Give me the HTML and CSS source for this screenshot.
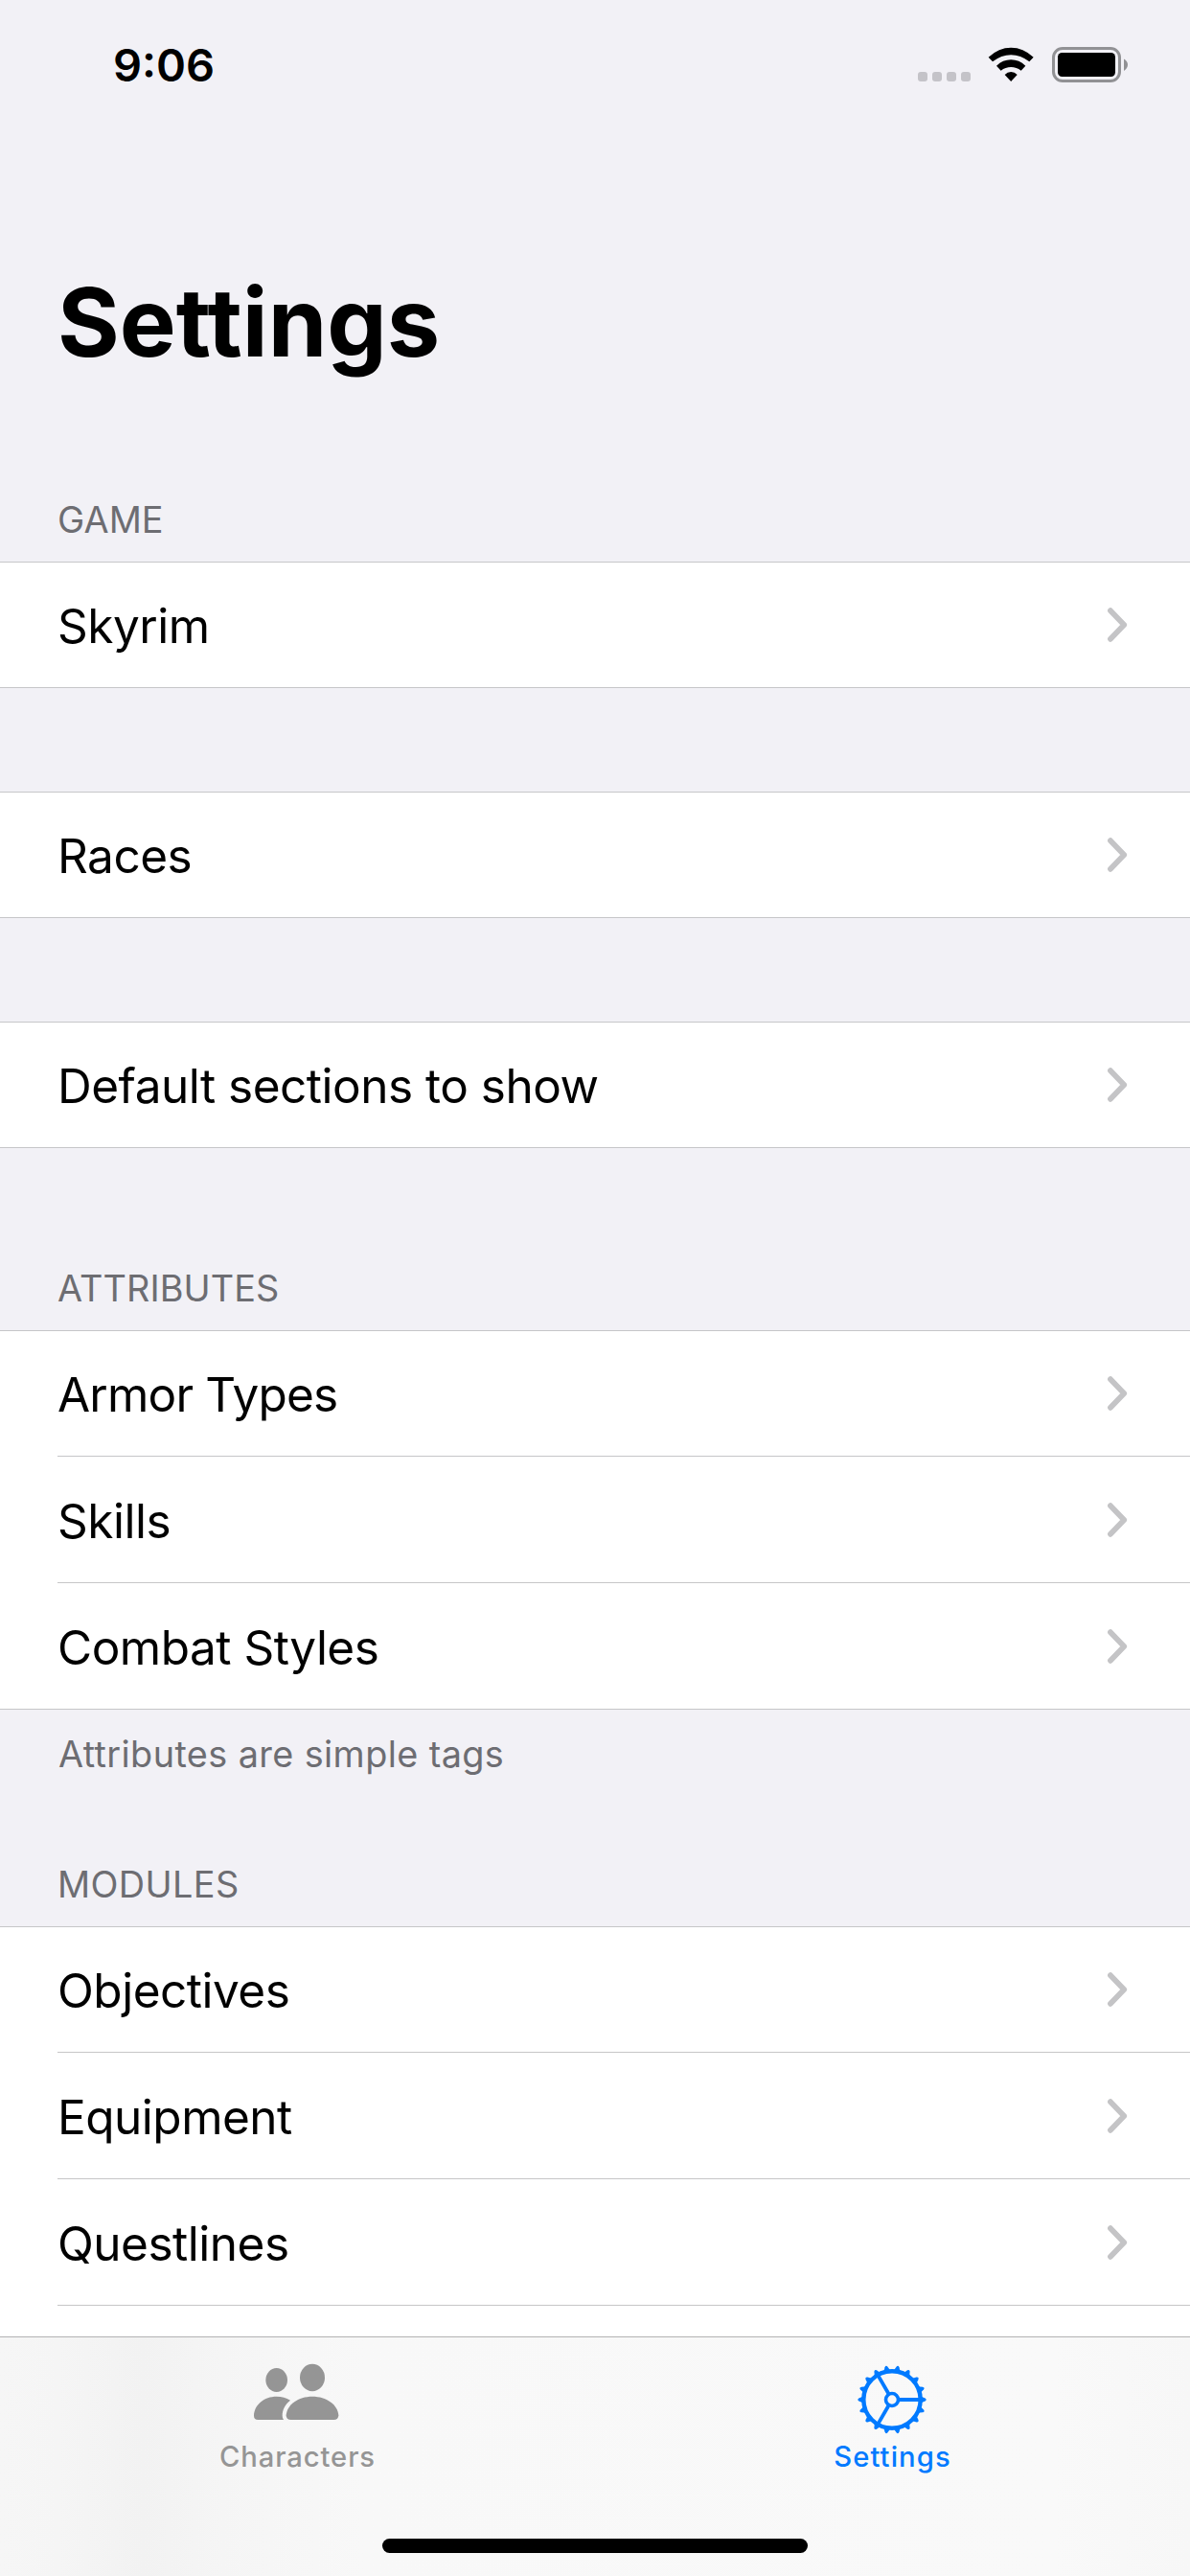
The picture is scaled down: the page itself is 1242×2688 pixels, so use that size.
FILE: index.html
```html
<!DOCTYPE html>
<html lang="en">
<head>
<meta charset="utf-8">
<title>Settings</title>
<link rel="stylesheet" href="styles.css">
</head>
<body>
<svg class="defs" width="0" height="0" aria-hidden="true">
  <symbol id="chevron" viewBox="0 0 22 38"><path d="M4 4.2 18.2 19 4 33.8" fill="none" stroke="#c4c4c6" stroke-width="5.8" stroke-linecap="round" stroke-linejoin="round"/></symbol>
</svg>
<div class="screen">
  <header class="status">
    <div class="time">9:06</div>
    <div class="indicators">
      <div class="signal"><i></i><i></i><i></i><i></i></div>
      <svg class="wifi" viewBox="394 86 145 110">
        <path d="M396 118Q428 88 466.500 88T537 118L524 132Q497 110.500 466.500 110.500T409 132Z"/>
        <path d="M421 145Q441 126 466.500 126T512 145L498 160Q484 149 466.500 149T435 160Z"/>
        <path d="M447 173Q455 164 466.500 164T486 173L466.500 194Z"/>
      </svg>
      <svg class="battery" viewBox="0 0 80 38">
        <rect x="1.500" y="1.500" width="69" height="34" rx="9.500" fill="none" stroke="#919194" stroke-width="3"/>
        <rect x="6" y="6" width="60" height="25" rx="4.500" fill="#000"/>
        <path d="M75 12.500Q79 15 79 18.500T75 25Z" fill="#919194"/>
      </svg>
    </div>
  </header>

  <h1 class="title">Settings</h1>

  <main class="list">
    <h2 class="heading">GAME</h2>
    <ul class="group">
      <li class="row"><span>Skyrim</span><svg class="chev"><use href="#chevron"/></svg></li>
    </ul>
    <ul class="group spaced">
      <li class="row"><span>Races</span><svg class="chev"><use href="#chevron"/></svg></li>
    </ul>
    <ul class="group spaced">
      <li class="row"><span>Default sections to show</span><svg class="chev"><use href="#chevron"/></svg></li>
    </ul>
    <h2 class="heading">ATTRIBUTES</h2>
    <ul class="group">
      <li class="row"><span class="tight">Armor Types</span><svg class="chev"><use href="#chevron"/></svg></li>
      <li class="row"><span>Skills</span><svg class="chev"><use href="#chevron"/></svg></li>
      <li class="row"><span>Combat Styles</span><svg class="chev"><use href="#chevron"/></svg></li>
    </ul>
    <p class="footnote">Attributes are simple tags</p>
    <h2 class="heading after-note">MODULES</h2>
    <ul class="group">
      <li class="row"><span>Objectives</span><svg class="chev"><use href="#chevron"/></svg></li>
      <li class="row"><span>Equipment</span><svg class="chev"><use href="#chevron"/></svg></li>
      <li class="row"><span>Questlines</span><svg class="chev"><use href="#chevron"/></svg></li>
      <li class="row"></li>
    </ul>
  </main>

  <nav class="tabbar">
    <div class="tabs">
      <div class="tab">
        <svg class="people" viewBox="189 135 276 186">
          <ellipse cx="266" cy="190.500" rx="34" ry="37.500"/>
          <ellipse cx="378" cy="183" rx="39" ry="42.500"/>
          <path d="M208 315Q195 315 195 302C196 268 227 242 266 242Q290 242 309 254C292 267 284 285 284 302Q284 310 288 315Z"/>
          <path d="M311 315Q296 315 296 301C298 268 334 242 378 242S458 268 460 301Q460 315 445 315Z"/>
        </svg>
        <span>Characters</span>
      </div>
      <div class="tab active">
        <svg class="gear" viewBox="-37 -37 74 74">
          <defs><path id="tooth" d="M30-3.600L34.600-1.500Q36.800 0 34.600 1.500L30 3.600Z"/></defs>
          <circle r="29.700" class="line ring"/>
          <circle r="6.500" class="line hub"/>
          <path class="line spoke" d="M7.500 0H29M-3.750 6.500-14.500 25.110M-3.750-6.500-14.500-25.110"/>
          <use href="#tooth"/><use href="#tooth" transform="rotate(20)"/><use href="#tooth" transform="rotate(40)"/>
          <use href="#tooth" transform="rotate(60)"/><use href="#tooth" transform="rotate(80)"/><use href="#tooth" transform="rotate(100)"/>
          <use href="#tooth" transform="rotate(120)"/><use href="#tooth" transform="rotate(140)"/><use href="#tooth" transform="rotate(160)"/>
          <use href="#tooth" transform="rotate(180)"/><use href="#tooth" transform="rotate(200)"/><use href="#tooth" transform="rotate(220)"/>
          <use href="#tooth" transform="rotate(240)"/><use href="#tooth" transform="rotate(260)"/><use href="#tooth" transform="rotate(280)"/>
          <use href="#tooth" transform="rotate(300)"/><use href="#tooth" transform="rotate(320)"/><use href="#tooth" transform="rotate(340)"/>
        </svg>
        <span>Settings</span>
      </div>
    </div>
    <div class="home"></div>
  </nav>
</div>
</body>
</html>
```
FILE: styles.css
```css
* { box-sizing: border-box; margin: 0; padding: 0; }

body {
  background: #f2f1f6;
  color: #000;
  font-family: Inter, "Liberation Sans", sans-serif;
}

.defs { display: block; }

.screen {
  display: flex;
  flex-direction: column;
  width: 1242px;
  height: 2688px;
  overflow: hidden;
}

/* Status bar */
.status {
  display: flex;
  justify-content: space-between;
  flex: none;
  height: 132px;
  padding: 38px 62px 0 118px;
}
.time { font-size: 47px; font-weight: 600; line-height: 60px; }
.indicators { display: flex; align-items: flex-start; padding-top: 10px; }
.signal { display: flex; gap: 5px; margin: 27px 18px 0 0; }
.signal i { width: 10px; height: 10px; border-radius: 3px; background: #c4c3c8; }
.wifi { width: 48.330px; height: 36.670px; margin: .67px 18.670px 0 0; }
.battery { width: 80px; height: 38px; margin-top: 1px; margin-right: 2px; }

.title {
  flex: none;
  padding: 144px 60px 0;
  font-size: 99px;
  font-weight: 700;
  line-height: 120px;
}

/* Grouped list */
.list { flex: 1; min-height: 0; overflow: hidden; }
.heading, .footnote {
  padding-left: 60px;
  color: #6d6d72;
  font-size: 37.800px;
  font-weight: 400;
  line-height: 48px;
}
.heading { padding-top: 122px; padding-bottom: 20px; letter-spacing: .1px; }
.heading.after-note { padding-top: 88px; letter-spacing: .4px; }
.footnote { padding-top: 22px; padding-left: 61px; letter-spacing: .4px; }

.group { list-style: none; background: #fff; border-top: 1px solid #c6c6c8; border-bottom: 1px solid #c6c6c8; }
.group.spaced { margin-top: 108px; }
.row {
  display: flex;
  align-items: center;
  justify-content: space-between;
  height: 131px;
  margin-left: 60px;
  padding-right: 65px;
  border-bottom: 1px solid #c6c6c8;
  font-size: 49.500px;
  line-height: 60px;
  letter-spacing: -.5px;
}
.row + .row { height: 132px; padding-top: 1px; }
.row:last-child { border-bottom: 0; height: 131px; }
.row:only-child { height: 130px; }
.row span { padding-top: 2px; }
.row .tight { letter-spacing: -.8px; }
.chev { flex: none; width: 22px; height: 38px; }

/* Tab bar */
.tabbar {
  display: flex;
  flex-direction: column;
  align-items: center;
  flex: none;
  height: 250px;
  border-top: 1px solid #b2b2b3;
  background: linear-gradient(90deg, #f6f6f6 0, #f5f5f5 60px, #f2f2f2 150px, #f5f5f5 230px, #f8f8f8 380px, #f9f9f9 1100px, #f7f7f7 1242px);
}
.tabs { display: flex; width: 100%; height: 210px; }
.tab {
  flex: 1;
  display: flex;
  flex-direction: column;
  align-items: center;
  color: #959595;
  font-size: 29.200px;
  font-weight: 500;
  line-height: 36px;
  letter-spacing: .9px;
}
.tab span { margin-top: auto; padding-bottom: 67px; }
.tab svg { flex: none; fill: currentColor; }
.people { width: 92px; height: 62px; margin: 26px 3px 0 0; }
.gear { width: 74px; height: 74px; margin: 28px 1px 0 0; }
.active { color: #007aff; letter-spacing: 1.100px; }
.gear .line { fill: none; stroke: currentColor; }
.gear .ring { stroke-width: 4.400px; }
.gear .hub { stroke-width: 3.600px; }
.gear .spoke { stroke-width: 3.800px; }
.home { width: 444px; height: 15px; border-radius: 8px; background: #000; }
```
